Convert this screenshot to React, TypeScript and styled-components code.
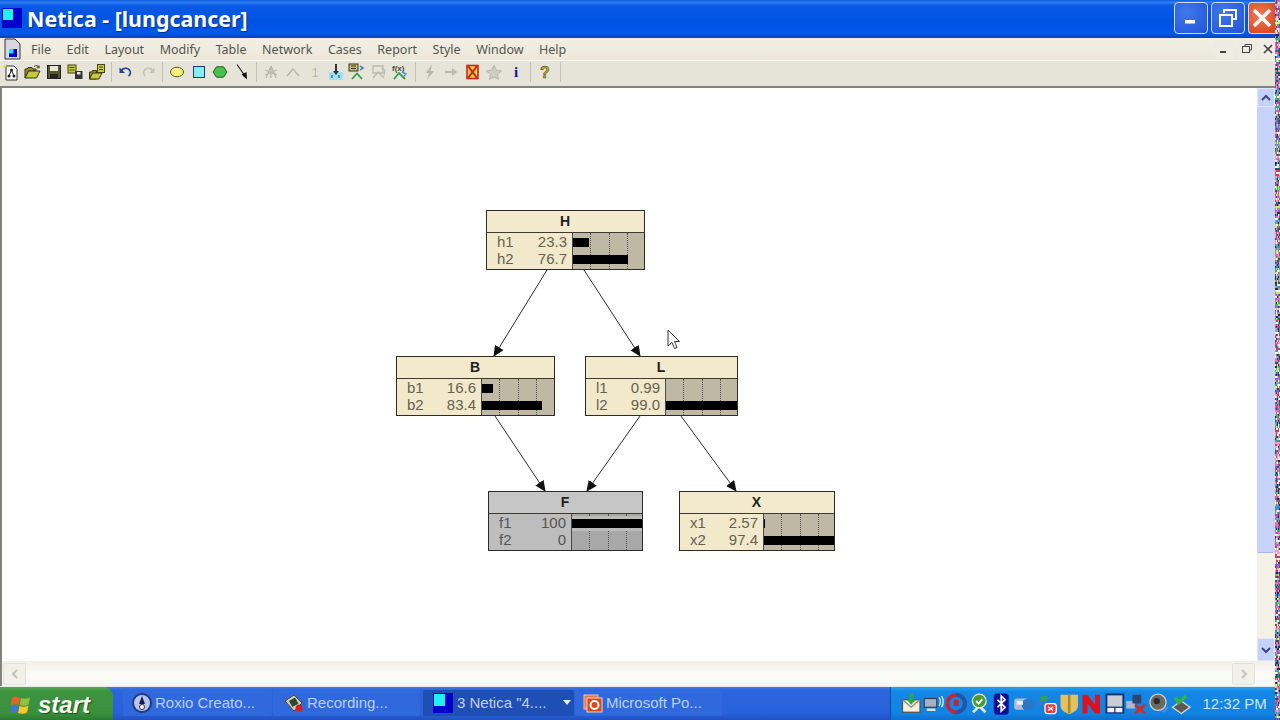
import React from "react";
import styled, { createGlobalStyle } from "styled-components";

const Global = createGlobalStyle`
  html, body { margin: 0; padding: 0; width: 1280px; height: 720px; overflow: hidden; background: #fff; }
  * { box-sizing: border-box; }
  body { font-family: "Liberation Sans", Arial, sans-serif; }
`;

const Page = styled.div`display: flex; width: 1280px; height: 720px; overflow: hidden;`;
const Screen = styled.div`display: flex; flex-direction: column; width: 1275px; height: 720px; flex: none;`;
const NoiseStrip = styled.svg`display: block; width: 5px; height: 720px; flex: none;`;

const TitleBar = styled.header`
  height: 38px; flex: none; display: flex; align-items: center; padding: 0 0 0 2px;
  background: linear-gradient(#0a5ce0 0, #2f7df2 6%, #0a5ae6 14%, #0053e2 55%, #0058ea 88%, #0a44b8 100%);
`;
const AppGlyph = styled.svg`width: 20px; height: 20px; flex: none; margin-top: -2px;`;
const TitleText = styled.h1`
  margin: -1px 0 0 5px; flex: 1; font: bold 21.4px "Noto Sans", "Liberation Sans", sans-serif; color: #fff;
  text-shadow: 1px 1px 1px #0a2f90; line-height: 38px;
`;
const WinButton = styled.button<{ $close?: boolean; $w: number }>`
  width: ${p => p.$w}px; height: 32px; margin-left: 3px; margin-top: -3px; padding: 0; flex: none;
  display: flex; align-items: center; justify-content: center;
  border: 1px solid #cfdcf8; border-radius: ${p => (p.$close ? "4px 0 0 4px" : "4px")};
  border-right-width: ${p => (p.$close ? 0 : 1)}px;
  background: ${p => p.$close
    ? "radial-gradient(circle at 40% 40%, #ee7a55, #dd4a22 80%)"
    : "radial-gradient(circle at 35% 30%, #3f78ea, #2a5ee0 70%, #2450cc)"};
`;

const MenuBar = styled.nav`
  height: 23px; flex: none; display: flex; align-items: center; padding-left: 3px;
  background: linear-gradient(#f1efe4, #ece9da); border-bottom: 1px solid #f8f7f0;
`;
const DocGlyph = styled.svg`width: 18px; height: 22px; flex: none; margin-right: 10px;`;
const MenuList = styled.div`display: flex; gap: 15.5px; flex: 1;`;
const MenuEntry = styled.span`font: 12.5px/23px "Noto Sans", "Liberation Sans", sans-serif; color: #55554f;`;
const MdiButton = styled.span<{ $w: number }>`
  width: ${p => p.$w}px; height: 19px; margin-left: 3px; flex: none; display: flex; align-items: center; justify-content: center;
  background: #edebe2; border-radius: 2px; overflow: hidden;
`;

const ToolBar = styled.div`
  height: 25px; flex: none; display: flex; align-items: center; padding-bottom: 4px;
  background: #e6e4d9;
`;
const ToolSlot = styled.span`width: 21.5px; height: 20px; flex: none; display: flex; align-items: center; justify-content: center;`;
const ToolSep = styled.span`width: 1px; height: 20px; margin: 0 3.5px; flex: none; background: #c4c2b6;`;

const Middle = styled.div`flex: 1; min-height: 0; display: flex; flex-direction: column; border-top: 2px solid #84837a; border-left: 2px solid #84837a;`;
const ClientRow = styled.div`flex: 1; min-height: 0; display: flex;`;
const Canvas = styled.main`flex: 1; position: relative; background: #fff;`;
const VScroll = styled.aside`width: 18px; flex: none; display: flex; flex-direction: column; background: #f3f1e6;`;
const ScrollEnd = styled.span<{ $h: number }>`
  height: ${p => p.$h}px; flex: none; display: flex; align-items: center; justify-content: center;
  background: #c6d1f9; border-radius: 2px; border: 1px solid #dfe5fb;
`;
const ScrollThumb = styled.span`height: 446px; flex: none; background: #c7d3fb; border-radius: 2px; border-bottom: 1px solid #a9b6e6;`;
const ScrollGap = styled.span`flex: 1;`;
const HScroll = styled.div`
  height: 25px; flex: none; display: flex; align-items: center; justify-content: space-between; padding: 0 20px 0 1px;
  background: linear-gradient(#f1efe6, #fbfbf8 55%, #f7f6f0);
`;
const HEnd = styled.span`
  width: 23px; height: 22px; display: flex; align-items: center; justify-content: center;
  background: #f1f0e9; border: 1px solid #e4e3da; border-radius: 2px;
`;

const Edges = styled.svg`position: absolute; left: 0; top: 0; width: 1255px; height: 572px; pointer-events: none;`;
const Pointer = styled.svg`position: absolute; left: 665px; top: 241px; width: 14px; height: 22px;`;

const NodeBox = styled.section<{ $x: number; $y: number; $w: number; $grey?: boolean }>`
  position: absolute; left: ${p => p.$x}px; top: ${p => p.$y}px; width: ${p => p.$w}px; height: 60px;
  border: 1px solid #2b2b28; display: flex; flex-direction: column; background: ${p => (p.$grey ? "#bdbdbd" : "#f2e9cd")};
`;
const NodeTitle = styled.h2<{ $grey?: boolean }>`
  margin: 0; height: 22px; flex: none; padding-right: 1px; text-align: center; font: bold 14px/21px "Liberation Sans", sans-serif; color: #1e1e1e;
  background: ${p => (p.$grey ? "#c6c6c6" : "#f3eace")}; border-bottom: 1px solid #3c3a33;
`;
const NodeBody = styled.div<{ $label: number }>`flex: 1; display: grid; grid-template-columns: ${p => p.$label}px 1fr; min-height: 0;`;
const Labels = styled.div`display: grid; grid-template-rows: 17px 17px; align-content: start; padding: 0 5px 0 10px; border-right: 1px solid #4a4840;`;
const LabelRow = styled.div<{ $grey?: boolean }>`
  display: flex; justify-content: space-between; font-size: 15px; line-height: 17px; color: ${p => (p.$grey ? "#555" : "#66624f")};
`;
const Bars = styled.div<{ $grey?: boolean }>`
  position: relative; display: grid; grid-template-rows: 17px 17px; align-content: start; padding-top: 1px; overflow: hidden;
  background: ${p => (p.$grey ? "#a8a8a8" : "#bfb8a4")};
`;
const Tick = styled.i<{ $at: number }>`
  position: absolute; top: 0; bottom: 0; left: ${p => p.$at}px; border-left: 1px dotted #55534a;
`;
const BarTrack = styled.div<{ $strip?: boolean }>`
  display: flex; align-items: center; position: relative; height: 15px; align-self: center;
  background: ${p => (p.$strip ? "#bcbcbc" : "transparent")};
`;
const Bar = styled.span`display: block; height: 9px; background: #000;`;

const TaskBar = styled.footer`
  height: 34px; flex: none; display: flex; align-items: center; border-top: 1px solid #e6e8ec;
  background: linear-gradient(#3a7ce6 0, #2b64dc 10%, #2862da 80%, #2150c0 100%);
`;
const StartButton = styled.button`
  width: 113px; height: 33px; flex: none; display: flex; align-items: center; gap: 7px; padding: 2px 0 0 11px; border: 0; margin-right: 10px;
  background: linear-gradient(#5aa85a 0, #3d943f 12%, #3a8f3c 80%, #2a7a30 100%); border-radius: 0 9px 0 0;
  font: italic bold 24px "Liberation Sans", sans-serif; color: #f6f8f2; text-shadow: 1px 1px 1px #1c4a1c;
`;
const TaskItem = styled.div<{ $w: number; $active?: boolean; $after?: number; $pad: number; $gap: number }>`
  width: ${p => p.$w}px; height: 26px; flex: none; display: flex; align-items: center; gap: ${p => p.$gap}px;
  padding-left: ${p => p.$pad}px; margin-right: ${p => p.$after ?? 1}px; margin-top: -2px; border-radius: 2px;
  background: ${p => (p.$active ? "#1e4fb4" : "#3069de")}; color: ${p => (p.$active ? "#c4d0ea" : "#bccff4")}; font-size: 15px; white-space: nowrap;
`;
const Caret = styled.span`width: 0; height: 0; margin-left: 12px; border-left: 4px solid transparent; border-right: 4px solid transparent; border-top: 5px solid #e8eefc;`;
const Tray = styled.div`
  margin-left: auto; width: 385px; height: 33px; flex: none; display: flex; align-items: center; padding-left: 9px;
  background: linear-gradient(#26a0ee 0, #1486e6 15%, #1183e2 80%, #0f6fce 100%); border-left: 1px solid #0f4fa8;
`;
const TraySlot = styled.span`width: 22.5px; height: 22px; flex: none; display: flex; align-items: center; justify-content: center;`;
const Clock = styled.time`margin-left: 10px; font-size: 15px; color: #cfe4fb; white-space: nowrap;`;

const noise = (() => {
  const palette = ["#e86fb0", "#39b36b", "#2a2a55", "#f2f0d0", "#8a5fd0", "#d8e060", "#3f8fd0", "#e9a0c8", "#1f5f50", "#ffffff", "#a0a0a0", "#c04070"];
  let s = 12345;
  const out: { x: number; y: number; c: string }[] = [];
  for (let y = 0; y < 360; y++) for (let x = 0; x < 5; x++) {
    s = (s * 1103515245 + 12345) & 0x7fffffff;
    out.push({ x, y: y * 2, c: palette[(s >> 8) % palette.length] });
  }
  return out;
})();

const Ic = ({ children, w = 18, h = 18 }: { children: React.ReactNode; w?: number; h?: number }) => (
  <svg width={w} height={h} viewBox="0 0 18 18">{children}</svg>
);
const Y = "#c8c83c";
const G = "#b9b8ae";
const T = 23;
const toolIcons: React.ReactNode[][] = [
  [
    <Ic key="n"><path d="M4 3h8l3 3v11H4z" fill="#fff" stroke="#333" /><path d="M2 1l1 2 2 .5-2 1L2 6 1.500 4.500 0 3.500l1.500-.5z" fill="#e8e040" /><circle cx="9.500" cy="7" r="1.500" fill="#222" /><circle cx="7" cy="13" r="1.500" fill="#222" /><circle cx="12" cy="13" r="1.500" fill="#222" /><path d="M9.500 7L7 13M9.500 7L12 13" stroke="#222" /></Ic>,
    <Ic key="o"><path d="M2 15V6h2l1-1.500h4L10 6h3v2H5.500L2 15z" fill="#8f8f2c" stroke="#33331a" /><path d="M2 15l3.500-7H17l-3.500 7z" fill={Y} stroke="#33331a" /><path d="M11 3.500c2-1.500 4-1 5 1M16 2.500v2.300h-2.300" fill="none" stroke="#33331a" /></Ic>,
    <Ic key="s"><rect x="2.500" y="2.500" width="13" height="13" fill="#565630" stroke="#222" /><rect x="5" y="3" width="8" height="5" fill="#e8e8d8" /><rect x="5" y="11" width="8" height="4" fill="#222" /></Ic>,
    <Ic key="a"><rect x="2" y="2" width="8" height="8" fill={Y} stroke="#444416" /><path d="M3.500 4.500h5M3.500 7h5" stroke="#444416" /><rect x="9" y="8" width="7.500" height="8" fill="#333" /><rect x="11" y="9" width="3.500" height="2.500" fill="#e8e8d8" /></Ic>,
    <Ic key="f"><path d="M1.500 16V9h2l1-1.500h4V16z" fill="#8f8f2c" stroke="#33331a" /><path d="M1.500 16l3-6H14l-3 6z" fill={Y} stroke="#33331a" /><rect x="9.500" y="1.500" width="7" height="8" fill={Y} stroke="#444416" /><path d="M11 4h4M11 6.500h4" stroke="#444416" /></Ic>,
  ],
  [
    <Ic key="u"><path d="M4 8c2-3.500 7-4 9 0 .8 2 0 4-1.500 5" fill="none" stroke="#2a3f90" strokeWidth="1.600" /><path d="M2.500 4.500v5.500H8z" fill="#2a3f90" /></Ic>,
    <Ic key="r"><path d="M14 8c-2-3.500-7-4-9 0-.8 2 0 4 1.500 5" fill="none" stroke="#c4c3ba" strokeWidth="1.600" /><path d="M15.500 4.500v5.500H10z" fill="#c4c3ba" /></Ic>,
  ],
  [
    <Ic key="e"><ellipse cx="9" cy="9" rx="6.500" ry="4.800" fill="#f2f27a" stroke="#55552a" /></Ic>,
    <Ic key="b"><rect x="3.500" y="3.500" width="11" height="11" fill="#86eefc" stroke="#223a70" /></Ic>,
    <Ic key="h"><path d="M5.500 3.800h7L16 9l-3.500 5.200h-7L2 9z" fill="#4cc04c" stroke="#1f5a1f" /></Ic>,
    <Ic key="l"><path d="M4 1.500l7 10" stroke="#222" strokeWidth="1.200" /><path d="M8.500 11.500l5-2.500.5 7.500z" fill="#111" /></Ic>,
  ],
  [
    <Ic key="g1"><path d="M9 3l-5 12M9 3l5 12M3 7l12 5M15 7L3 12M9 3v12" stroke={G} strokeWidth="1.300" /></Ic>,
    <Ic key="g2"><path d="M3 13l6-7 6 7" fill="none" stroke={G} strokeWidth="1.600" /><path d="M9 6l2 3" stroke="#d2d1c8" /></Ic>,
    <Ic key="g3"><text x="6.500" y="14" fontSize="13" fontFamily="Liberation Sans" fill={G}>1</text></Ic>,
    <Ic key="c1"><rect x="2" y="9" width="14" height="8" fill="#9ee4ef" /><path d="M9 1v9" stroke="#333" strokeWidth="2" /><path d="M6 8h6l-3 4z" fill="#333" /><path d="M5 12v3M12 12v3" stroke="#335" /></Ic>,
    <Ic key="c2"><rect x="1" y="1" width="9" height="7" fill={Y} stroke="#333" /><path d="M3 3h5M3 5.500h5" stroke="#333" /><path d="M12 3l3 2-3 2" fill="none" stroke="#2a6ad0" strokeWidth="1.400" /><path d="M4 16l5-5.500 5 5.500" fill="none" stroke="#2fa04a" strokeWidth="1.800" /></Ic>,
    <Ic key="c3"><path d="M3 3h10v7H3zM3 15l5-6 6 6" fill="none" stroke={G} strokeWidth="1.300" /><path d="M11 5l4 2-1 6" fill="none" stroke={G} /></Ic>,
    <Ic key="c4"><text x="1" y="8" fontSize="8" fontWeight="bold" fontFamily="Liberation Sans" fill="#3a4a3a">f(x)</text><path d="M3 16l5-6 6 6" fill="none" stroke="#2fa04a" strokeWidth="1.800" /><path d="M11 9l4 2-3 3" fill="none" stroke="#5a8ad0" strokeWidth="1.400" /></Ic>,
  ],
  [
    <Ic key="z"><path d="M11 1L5 10h3l-2 7 7-9h-3.500z" fill={G} /></Ic>,
    <Ic key="ar"><path d="M3 9h8" stroke={G} strokeWidth="2" /><path d="M10 5l5 4-5 4z" fill={G} /></Ic>,
    <Ic key="x"><rect x="3" y="2.500" width="11" height="13" fill="#e8d040" stroke="#d0281c" strokeWidth="1.600" /><path d="M4 3l9 12M13 3L4 15" stroke="#c8201c" strokeWidth="2" /></Ic>,
    <Ic key="st"><path d="M9 2l2 5 5.500 1-4 3.500 1 5L9 14l-4.500 2.500 1-5-4-3.500L7 7z" fill="#cfcec5" stroke={G} /></Ic>,
    <Ic key="i"><text x="9" y="14" textAnchor="middle" fontSize="15" fontWeight="bold" fontFamily="Liberation Serif" fill="#1a1a80">i</text></Ic>,
  ],
  [
    <Ic key="q"><text x="9" y="15" textAnchor="middle" fontSize="16" fontWeight="bold" fontFamily="Liberation Sans" fill="#b8b020" stroke="#3a3a20" strokeWidth=".5">?</text></Ic>,
  ],
];

const trayIcons: React.ReactNode[] = [
  <Ic key="0" w={T} h={T}><rect x="2" y="6" width="14" height="10" fill="#f4f0dc" stroke="#555" /><path d="M2 6l7 6 7-6" fill="none" stroke="#888" /><path d="M9 1v7" stroke="#2fa83f" strokeWidth="3" /><path d="M5.500 6h7L9 10z" fill="#2fa83f" /></Ic>,
  <Ic key="1" w={T} h={T}><rect x="1" y="5" width="10" height="7" fill="#9fb3c8" stroke="#38425a" /><rect x="3" y="13" width="7" height="2" fill="#e0e0e0" /><path d="M13 4c1 2 1 5 0 7M15 3c1.500 3 1.500 6 0 9" fill="none" stroke="#e8eef8" /></Ic>,
  <Ic key="2" w={T} h={T}><circle cx="9" cy="9" r="7" fill="none" stroke="#c02838" strokeWidth="3" /><path d="M9 2a7 7 0 0 1 0 14" fill="none" stroke="#1c58a8" strokeWidth="3" /><path d="M7 6h4v5H7z" fill="#c02838" /></Ic>,
  <Ic key="3" w={T} h={T}><path d="M4 16l5-5 5 5" stroke="#e8e8d8" strokeWidth="2" fill="none" /><circle cx="9" cy="7" r="5.500" fill="#4a9a3c" stroke="#dff0d0" /><path d="M6.500 7l2 2 3-3.500" fill="none" stroke="#fff" strokeWidth="1.500" /></Ic>,
  <Ic key="4" w={T} h={T}><rect x="3" y="1" width="12" height="17" rx="3" fill="#10109a" /><path d="M6 6l6 6-3 3V3l3 3-6 6" fill="none" stroke="#fff" strokeWidth="1.400" /></Ic>,
  <Ic key="5" w={T} h={T}><rect x="1" y="5" width="12" height="9" rx="2" fill="#aebfd4" /><circle cx="12" cy="10" r="5" fill="#2a78c8" /><rect x="3" y="7" width="5" height="3" fill="#e8eef8" /></Ic>,
  <Ic key="6" w={T} h={T}><circle cx="7" cy="5" r="2.500" fill="#3ca03c" /><circle cx="4" cy="9" r="2.500" fill="#3a78d0" /><rect x="8" y="9" width="9" height="8" rx="2" fill="#e04040" stroke="#fff" /><path d="M10.500 11.500l4 3M14.500 11.500l-4 3" stroke="#fff" /></Ic>,
  <Ic key="7" w={T} h={T}><path d="M2 2h14v9c0 3-3 5-7 6.500C5 16 2 14 2 11z" fill="#e2c260" /><path d="M9 2v15" stroke="#a88828" strokeWidth="2" /></Ic>,
  <Ic key="8" w={T} h={T}><path d="M2 2h4l6 8V2h4v15h-4L6 9v8H2z" fill="#e0101c" /></Ic>,
  <Ic key="9" w={T} h={T}><rect x="2" y="1" width="15" height="16" fill="#16306e" /><rect x="3.500" y="2.500" width="12" height="9" fill="#c8ccd4" /><rect x="3.500" y="12.500" width="5.500" height="3.500" fill="#eef" /><rect x="10" y="12.500" width="5.500" height="3.500" fill="#eef" /></Ic>,
  <Ic key="10" w={T} h={T}><rect x="1" y="7" width="7" height="6" fill="#aab8d0" /><rect x="6" y="2" width="7" height="7" fill="#33456a" /><path d="M8 10l8 7M16 10l-8 7" stroke="#d82818" strokeWidth="2.200" /></Ic>,
  <Ic key="11" w={T} h={T}><circle cx="8" cy="8" r="6.500" fill="#6a6a60" stroke="#d0d0c4" /><circle cx="7" cy="7" r="2.500" fill="#2a2a2a" /><path d="M12 16l4-4" stroke="#5a90e0" strokeWidth="1.400" /></Ic>,
  <Ic key="12" w={T} h={T}><path d="M2 12l7-5 7 5-7 5z" fill="#5a5a50" stroke="#ddd" /><path d="M4 4l3 4 6-5" fill="none" stroke="#2fb04a" strokeWidth="3" /></Ic>,
];

type Row = { name: string; value: string; pct: number };
type NodeSpec = { title: string; x: number; y: number; w: number; label: number; grey?: boolean; rows: Row[] };
const nodes: NodeSpec[] = [
  { title: "H", x: 484, y: 122, w: 159, label: 86, rows: [{ name: "h1", value: "23.3", pct: 23.3 }, { name: "h2", value: "76.7", pct: 76.7 }] },
  { title: "B", x: 394, y: 268, w: 159, label: 85, rows: [{ name: "b1", value: "16.6", pct: 16.6 }, { name: "b2", value: "83.4", pct: 83.4 }] },
  { title: "L", x: 583, y: 268, w: 153, label: 80, rows: [{ name: "l1", value: "0.99", pct: 0.99 }, { name: "l2", value: "99.0", pct: 99 }] },
  { title: "F", x: 486, y: 403, w: 155, label: 83, grey: true, rows: [{ name: "f1", value: "100", pct: 100 }, { name: "f2", value: "0", pct: 0 }] },
  { title: "X", x: 677, y: 403, w: 156, label: 84, rows: [{ name: "x1", value: "2.57", pct: 2.57 }, { name: "x2", value: "97.4", pct: 97.4 }] },
];
const links = [
  [545, 182, 492, 268], [582, 182, 638, 268], [493, 328, 543, 403], [638, 328, 585, 403], [679, 328, 734, 403],
];

const menus = ["File", "Edit", "Layout", "Modify", "Table", "Network", "Cases", "Report", "Style", "Window", "Help"];

const NetGlyph = ({ size }: { size: number }) => (
  <svg width={size} height={size} viewBox="0 0 20 20"><rect width="20" height="20" fill="#0000c8" /><rect x="1" y="1" width="11" height="12" fill="#22f0f8" /></svg>
);

export default function App() {
  return (
    <Page>
      <Global />
      <Screen>
        <TitleBar>
          <AppGlyph viewBox="0 0 20 20"><rect width="20" height="20" fill="#0000c8" /><rect x="1" y="1" width="10" height="11" fill="#22f0f8" /></AppGlyph>
          <TitleText>Netica - [lungcancer]</TitleText>
          <WinButton $w={34}><svg width="16" height="16" viewBox="0 0 16 16"><rect x="2" y="10" width="10" height="3.500" fill="#fff" /></svg></WinButton>
          <WinButton $w={34}><svg width="20" height="20" viewBox="0 0 20 20"><path d="M6 5V2h12v9h-4" fill="none" stroke="#fff" strokeWidth="2" /><rect x="2" y="7" width="12" height="11" fill="none" stroke="#fff" strokeWidth="2" /></svg></WinButton>
          <WinButton $w={27} $close><svg width="20" height="20" viewBox="0 0 20 20"><path d="M2 2l16 16M18 2L2 18" stroke="#fff" strokeWidth="3.600" /></svg></WinButton>
        </TitleBar>
        <MenuBar>
          <DocGlyph viewBox="0 0 18 22"><path d="M2 1h10l5 5v15H2z" fill="#d8d6e0" stroke="#333" /><rect x="6" y="11" width="8" height="8" fill="#0000c8" /><rect x="6" y="11" width="4.500" height="4.500" fill="#22e0f0" /></DocGlyph>
          <MenuList>{menus.map(m => <MenuEntry key={m}>{m}</MenuEntry>)}</MenuList>
          <MdiButton $w={20}><svg width="10" height="10" viewBox="0 0 10 10"><rect x="1" y="7" width="6" height="2" fill="#444" /></svg></MdiButton>
          <MdiButton $w={20}><svg width="10" height="10" viewBox="0 0 10 10"><path d="M3 2V0.500h6.500V6H8" fill="none" stroke="#444" /><rect x="0.500" y="2.500" width="7" height="6" fill="none" stroke="#444" /></svg></MdiButton>
          <MdiButton $w={15}><svg width="10" height="10" viewBox="0 0 10 10"><path d="M1 1l8 8M9 1L1 9" stroke="#444" strokeWidth="1.600" /></svg></MdiButton>
        </MenuBar>
        <ToolBar>
          {toolIcons.map((group, i) => (
            <React.Fragment key={i}>
              {group.map((icon, j) => <ToolSlot key={j}>{icon}</ToolSlot>)}
              <ToolSep />
            </React.Fragment>
          ))}
        </ToolBar>
        <Middle>
          <ClientRow>
            <Canvas>
              <Edges viewBox="0 0 1255 572">
                <defs>
                  <marker id="head" markerWidth="11" markerHeight="10" refX="10" refY="5" orient="auto" markerUnits="userSpaceOnUse">
                    <path d="M0 0L11 5L0 10z" fill="#111" />
                  </marker>
                </defs>
                {links.map(([a, b, c, d], i) => (
                  <line key={i} x1={a} y1={b} x2={c} y2={d} stroke="#2b2b2b" strokeWidth="1" markerEnd="url(#head)" />
                ))}
              </Edges>
              {nodes.map(n => (
                <NodeBox key={n.title} $x={n.x} $y={n.y} $w={n.w} $grey={n.grey}>
                  <NodeTitle $grey={n.grey}>{n.title}</NodeTitle>
                  <NodeBody $label={n.label}>
                    <Labels>
                      {n.rows.map(r => (
                        <LabelRow key={r.name} $grey={n.grey}><span>{r.name}</span><span>{r.value}</span></LabelRow>
                      ))}
                    </Labels>
                    <Bars $grey={n.grey}>
                      <Tick $at={17} /><Tick $at={36} /><Tick $at={54} />
                      {n.rows.map(r => (
                        <BarTrack key={r.name} $strip={n.grey && r.pct === 100}><Bar style={{ width: `${Math.floor(r.pct * 0.72)}px` }} /></BarTrack>
                      ))}
                    </Bars>
                  </NodeBody>
                </NodeBox>
              ))}
              <Pointer viewBox="0 0 14 22"><path d="M1 1v16l4-3.500 2.500 6 2.500-1-2.500-6h5z" fill="#fff" stroke="#333" /></Pointer>
            </Canvas>
            <VScroll>
              <ScrollEnd $h={19}><svg width="12" height="8" viewBox="0 0 12 8"><path d="M2 6l4-4 4 4" fill="none" stroke="#3a4a7a" strokeWidth="2" /></svg></ScrollEnd>
              <ScrollThumb />
              <ScrollGap />
              <ScrollEnd $h={23}><svg width="12" height="8" viewBox="0 0 12 8"><path d="M2 2l4 4 4-4" fill="none" stroke="#3a4a7a" strokeWidth="2" /></svg></ScrollEnd>
            </VScroll>
          </ClientRow>
          <HScroll>
            <HEnd><svg width="8" height="10" viewBox="0 0 8 10"><path d="M6 1L2 5l4 4" fill="none" stroke="#c4c3ba" strokeWidth="2" /></svg></HEnd>
            <HEnd><svg width="8" height="10" viewBox="0 0 8 10"><path d="M2 1l4 4-4 4" fill="none" stroke="#c4c3ba" strokeWidth="2" /></svg></HEnd>
          </HScroll>
        </Middle>
        <TaskBar>
          <StartButton>
            <svg width="20" height="20" viewBox="0 0 20 20">
              <path d="M1 3c3-2 5-1 8 0l-1.500 7c-2-1-5-1-8 0z" fill="#e8602c" />
              <path d="M10 3c3 1 5 1 9-.5L17.500 9.500c-3 1.500-6 1.500-9 .5z" fill="#8cc63f" />
              <path d="M-.5 11c3-1 5-1 8 0L6 18c-3-1-5-1-8 0z" fill="#3a78e0" />
              <path d="M8.500 11c3 1 6 1 9-.5L16 17.500c-3 1.500-6 1.500-9 .5z" fill="#f6c828" />
            </svg>
            start
          </StartButton>
          <TaskItem $w={149} $pad={9} $gap={3}>
            <svg width="20" height="20" viewBox="0 0 20 20"><circle cx="10" cy="10" r="9" fill="#b8c4e8" stroke="#1e3a8a" strokeWidth="2" /><path d="M10 3l-3 8h6z" fill="#0e1e5a" /><circle cx="10" cy="14" r="2.500" fill="#fff" stroke="#333" /></svg>
            Roxio Creato...
          </TaskItem>
          <TaskItem $w={147} $pad={11} $gap={3} $after={3}>
            <svg width="20" height="20" viewBox="0 0 20 20"><path d="M1 8l9-6 8 8-8 8z" fill="#d8cfa8" stroke="#444" /><rect x="6" y="6" width="7" height="7" fill="#2a4a3a" transform="rotate(-30 9 9)" /><circle cx="15" cy="15" r="3.500" fill="#d82020" /></svg>
            Recording...
          </TaskItem>
          <TaskItem $w={151} $active $pad={10} $gap={4}>
            <NetGlyph size={20} />
            <span>3 Netica "4....</span>
            <Caret />
          </TaskItem>
          <TaskItem $w={147} $pad={8} $gap={3}>
            <svg width="20" height="20" viewBox="0 0 20 20"><rect x="1" y="2" width="14" height="14" fill="#e87848" stroke="#f6c0a0" /><rect x="4" y="5" width="15" height="14" fill="#d8481c" stroke="#f8d0b8" /><circle cx="11.500" cy="12" r="4" fill="none" stroke="#fff" strokeWidth="2" /></svg>
            Microsoft Po...
          </TaskItem>
          <Tray>
            {trayIcons.map((t, i) => <TraySlot key={i}>{t}</TraySlot>)}
            <Clock>12:32 PM</Clock>
          </Tray>
        </TaskBar>
      </Screen>
      <NoiseStrip viewBox="0 0 5 720" shapeRendering="crispEdges">
        {noise.map((n, i) => <rect key={i} x={n.x} y={n.y} width="1" height="2" fill={n.c} />)}
      </NoiseStrip>
    </Page>
  );
}
